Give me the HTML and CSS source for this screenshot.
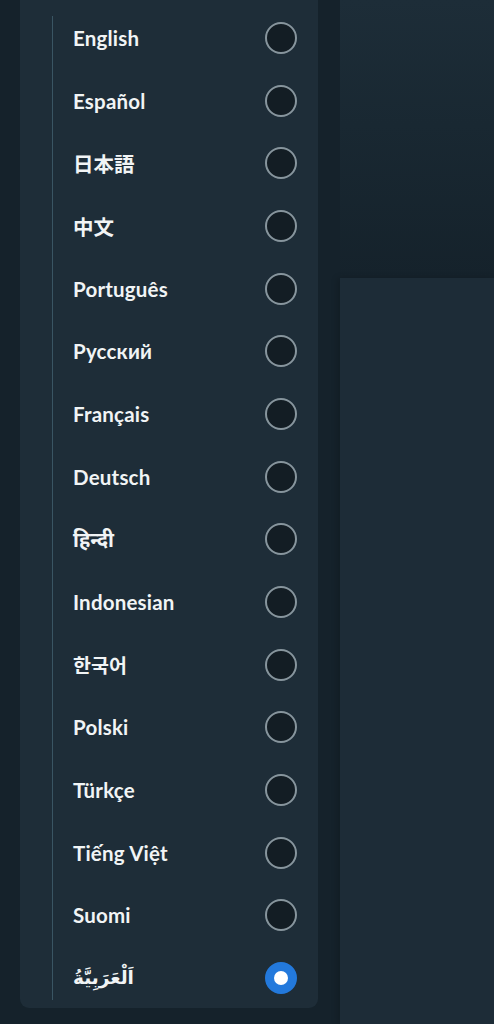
FILE: index.html
```html
<!DOCTYPE html>
<html lang="en">
<head>
<meta charset="utf-8">
<link rel="stylesheet" href="styles.css">
</head>
<body>
<div class="page">
  <div class="panel">
    <ul class="list">
      <li class="row"><span class="label">English</span><span class="radio"></span></li>
      <li class="row"><span class="label">Español</span><span class="radio"></span></li>
      <li class="row"><span class="label cjk">日本語</span><span class="radio"></span></li>
      <li class="row"><span class="label cjk">中文</span><span class="radio"></span></li>
      <li class="row"><span class="label">Português</span><span class="radio"></span></li>
      <li class="row"><span class="label">Русский</span><span class="radio"></span></li>
      <li class="row"><span class="label">Français</span><span class="radio"></span></li>
      <li class="row"><span class="label">Deutsch</span><span class="radio"></span></li>
      <li class="row"><span class="label hindi">हिन्दी</span><span class="radio"></span></li>
      <li class="row"><span class="label">Indonesian</span><span class="radio"></span></li>
      <li class="row"><span class="label kr">한국어</span><span class="radio"></span></li>
      <li class="row"><span class="label">Polski</span><span class="radio"></span></li>
      <li class="row"><span class="label">Türkçe</span><span class="radio"></span></li>
      <li class="row"><span class="label">Tiếng Việt</span><span class="radio"></span></li>
      <li class="row"><span class="label">Suomi</span><span class="radio"></span></li>
      <li class="row"><span class="label arabic">اَلْعَرَبِيَّةُ</span><span class="radio checked"></span></li>
    </ul>
  </div>
  <div class="side">
    <div class="side-top"></div>
    <div class="side-card"></div>
  </div>
</div>
</body>
</html>
```
FILE: styles.css
```css
html, body {
  margin: 0;
  padding: 0;
  background: #15222b;
  height: 100%;
  overflow: hidden;
}
body {
  font-family: "Lato", "Noto Sans", sans-serif;
}
.page {
  display: flex;
  align-items: flex-start;
  padding-left: 20px;
  gap: 22px;
  height: 1024px;
}
.panel {
  width: 245px;
  flex: none;
  background: #1e2d38;
  border-radius: 0 0 9px 9px;
  padding: 16px 21px 8px 32px;
}
.list {
  list-style: none;
  margin: 0;
  padding: 0 0 0 20px;
  border-left: 1px solid #3a5563;
  display: flex;
  flex-direction: column;
  gap: 18.67px;
}
.row {
  height: 44px;
  display: flex;
  align-items: center;
  justify-content: space-between;
}
.label {
  color: #f1f4f5;
  font-weight: 700;
  font-size: 20.5px;
  letter-spacing: 0.2px;
}
.label.cjk {
  font-family: "Noto Sans CJK JP", sans-serif;
  font-size: 20.5px;
  font-weight: 700;
  letter-spacing: 0;
}
.label.kr {
  font-family: "Noto Sans CJK KR", sans-serif;
  font-size: 19.5px;
  font-weight: 700;
  letter-spacing: 0;
}
.label.hindi {
  font-family: "Noto Sans", "Noto Sans Devanagari", sans-serif;
  font-size: 20px;
  letter-spacing: 0;
}
.label.arabic {
  font-family: "DejaVu Sans", "Noto Sans Arabic", sans-serif;
  font-size: 18.5px;
  letter-spacing: 0;
}
.radio {
  width: 28px;
  height: 28px;
  border-radius: 50%;
  border: 2px solid #87959d;
  background: #131d24;
  flex: none;
  box-sizing: content-box;
  display: flex;
  align-items: center;
  justify-content: center;
}
.radio.checked {
  border-color: #2379dc;
  background: #2379dc;
}
.radio.checked::after {
  content: "";
  width: 14px;
  height: 14px;
  border-radius: 50%;
  background: #ffffff;
}
.side {
  flex: 1;
  display: flex;
  flex-direction: column;
  height: 1024px;
}
.side-top {
  height: 278px;
  background: linear-gradient(180deg, #1d2d38 0%, #192832 45%, #15222b 100%);
}
.side-card {
  flex: 1;
  background: #1d2c37;
  box-shadow: -3px 0 6px rgba(0,0,0,0.15);
}
```
